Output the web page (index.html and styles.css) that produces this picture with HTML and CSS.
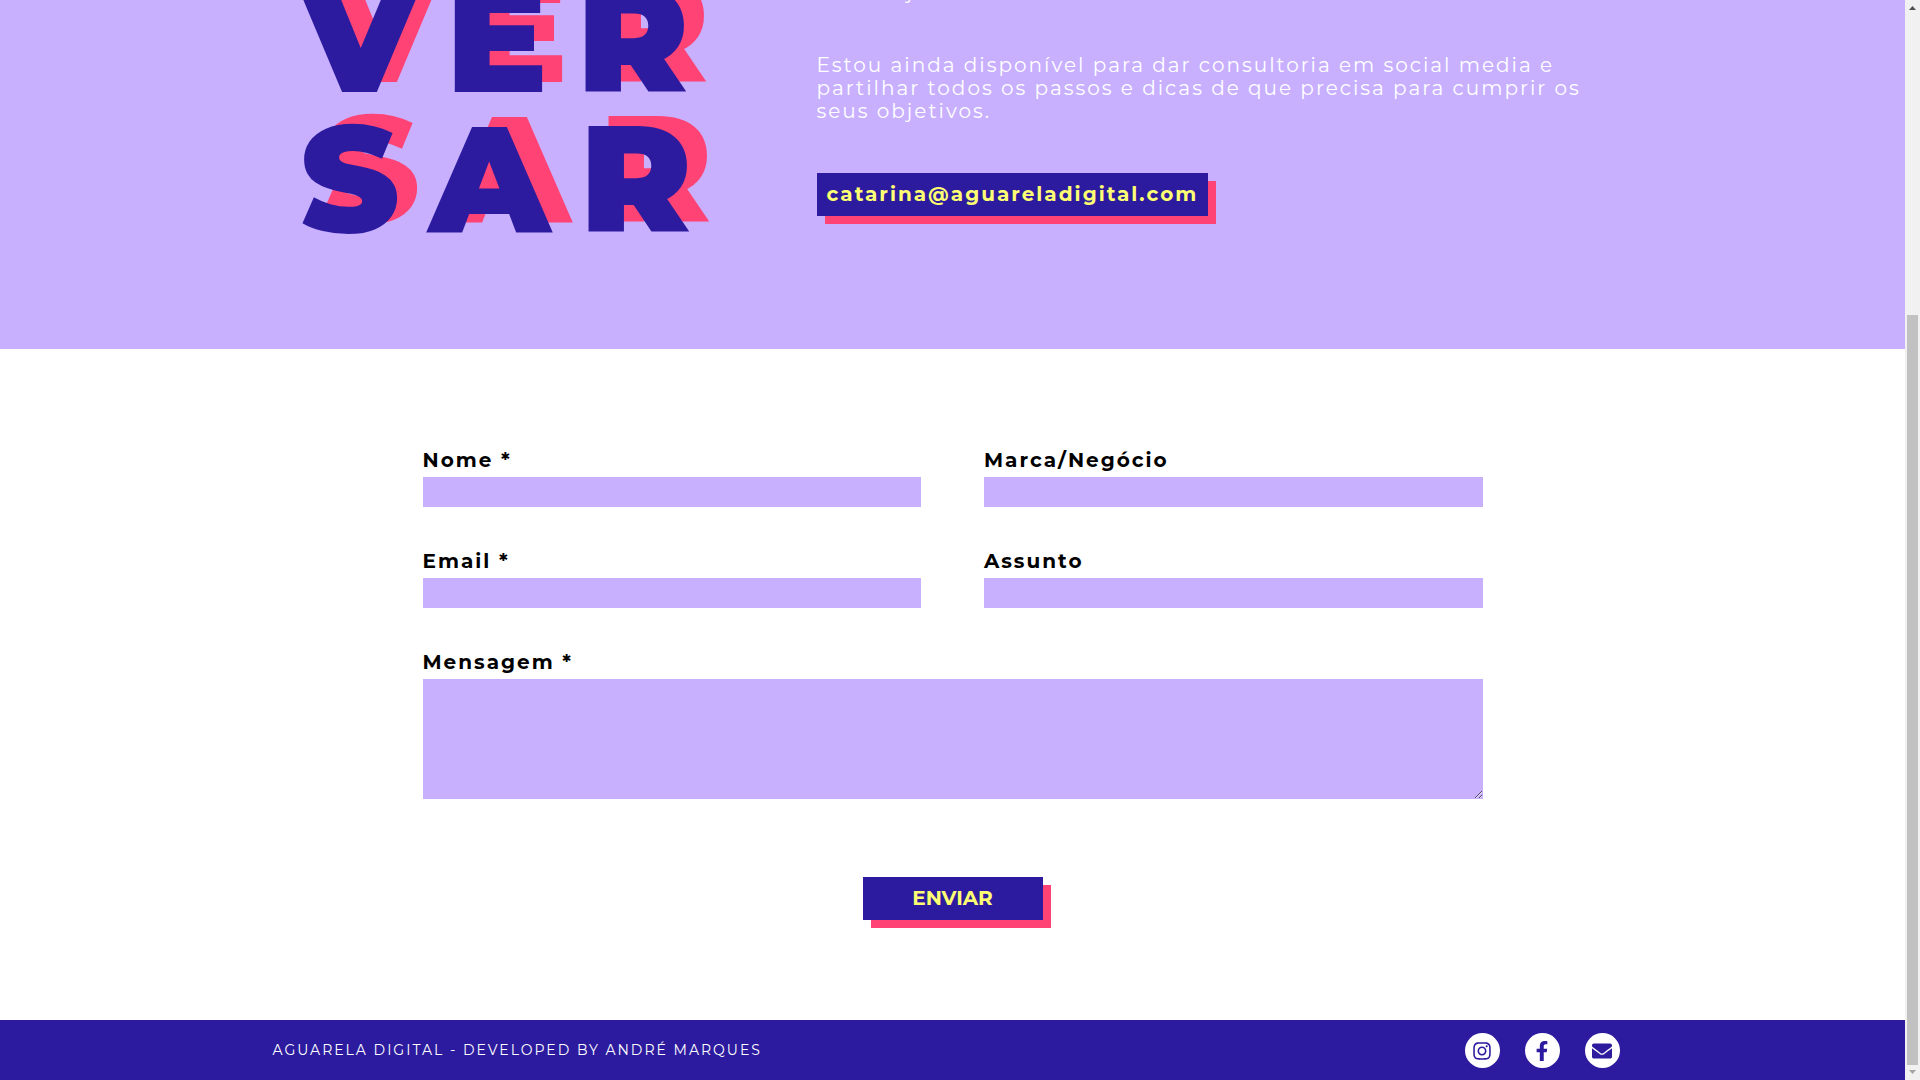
FILE: index.html
```html
<!DOCTYPE html>
<html lang="pt">
<head>
<meta charset="utf-8">
<title>Aguarela Digital</title>
<link rel="stylesheet" href="styles.css">
</head>
<body>
<div class="page">
  <section class="hero">
    <div class="hero-inner">
      <h1 class="hero-title">VER<br>SAR</h1>
      <div class="hero-info">
        <p>seus objetivos.</p>
        <p>Estou ainda disponível para dar consultoria em social media e<br>partilhar todos os passos e dicas de que precisa para cumprir os<br>seus objetivos.</p>
        <a class="email" href="mailto:catarina@aguareladigital.com">catarina@aguareladigital.com</a>
      </div>
    </div>
  </section>
  <main class="contact">
    <form class="form">
      <div class="field"><label for="nome">Nome *</label><input id="nome" type="text"></div>
      <div class="field"><label for="marca">Marca/Negócio</label><input id="marca" type="text"></div>
      <div class="field"><label for="email">Email *</label><input id="email" type="email"></div>
      <div class="field"><label for="assunto">Assunto</label><input id="assunto" type="text"></div>
      <div class="field wide"><label for="mensagem">Mensagem *</label><textarea id="mensagem"></textarea></div>
      <button class="send" type="submit">ENVIAR</button>
    </form>
  </main>
  <footer class="footer">
    <div class="footer-inner">
      <span class="credit">AGUARELA DIGITAL - DEVELOPED BY ANDRÉ MARQUES</span>
      <nav class="social">
        <a href="#instagram" aria-label="Instagram"><svg width="20" height="20" viewBox="-32 0 512 512" fill="currentColor"><path d="M224.100 141c-63.600 0-114.900 51.300-114.900 114.900s51.300 114.900 114.900 114.900S339 319.500 339 255.900 287.700 141 224.100 141zm0 189.600c-41.100 0-74.700-33.500-74.700-74.700s33.500-74.700 74.700-74.700 74.700 33.500 74.700 74.700-33.600 74.700-74.700 74.700zm146.400-194.300c0 14.900-12 26.800-26.800 26.800-14.900 0-26.800-12-26.800-26.800s12-26.800 26.800-26.800 26.800 12 26.800 26.800zm76.100 27.200c-1.700-35.900-9.900-67.700-36.200-93.900-26.200-26.200-58-34.400-93.900-36.200-37-2.100-147.900-2.100-184.900 0-35.800 1.700-67.600 9.900-93.900 36.100s-34.400 58-36.200 93.900c-2.100 37-2.100 147.900 0 184.900 1.700 35.900 9.900 67.700 36.200 93.900s58 34.400 93.900 36.200c37 2.100 147.900 2.100 184.900 0 35.900-1.700 67.700-9.900 93.900-36.200 26.200-26.200 34.400-58 36.200-93.900 2.100-37 2.100-147.800 0-184.800zM398.800 388c-7.800 19.600-22.900 34.700-42.600 42.600-29.500 11.700-99.500 9-132.100 9s-102.700 2.600-132.100-9c-19.600-7.800-34.700-22.900-42.600-42.600-11.700-29.500-9-99.500-9-132.100s-2.600-102.700 9-132.100c7.800-19.600 22.900-34.700 42.600-42.600 29.500-11.700 99.500-9 132.100-9s102.700-2.600 132.100 9c19.600 7.800 34.700 22.900 42.600 42.600 11.700 29.500 9 99.500 9 132.100s2.700 102.700-9 132.100z"/></svg></a>
        <a href="#facebook" aria-label="Facebook"><svg width="20" height="20" viewBox="-96 0 512 512" fill="currentColor"><path d="M279.140 288l14.220-92.660h-88.910v-60.130c0-25.350 12.420-50.060 52.240-50.060h40.420V6.260S260.430 0 225.360 0c-73.220 0-121.080 44.380-121.080 124.720v70.620H22.890V288h81.390v224h100.170V288z"/></svg></a>
        <a href="mailto:catarina@aguareladigital.com" aria-label="Email"><svg width="20" height="20" viewBox="0 0 512 512" fill="currentColor"><path d="M502.300 190.800c3.900-3.100 9.700-.2 9.700 4.700V400c0 26.500-21.500 48-48 48H48c-26.500 0-48-21.500-48-48V195.600c0-5 5.700-7.800 9.700-4.700 22.400 17.400 52.100 39.500 154.100 113.600 21.100 15.400 56.700 47.800 92.200 47.600 35.700.3 72-32.800 92.300-47.600 102-74.100 131.600-96.300 154-113.700zM256 320c23.200.4 56.600-29.200 73.400-41.400 132.700-96.300 142.800-104.700 173.400-128.700 5.800-4.500 9.200-11.500 9.200-18.900v-19c0-26.500-21.500-48-48-48H48c-26.500 0-48 21.500-48 48v19c0 7.400 3.400 14.300 9.200 18.900 30.600 23.900 40.700 32.400 173.400 128.700 16.800 12.200 50.200 41.800 73.400 41.400z"/></svg></a>
      </nav>
    </div>
  </footer>
</div>
<div class="scrollbar" aria-hidden="true">
  <svg width="15" height="15" viewBox="0 0 15 15"><path d="M4 10h7L7.500 6z" fill="#505050"/></svg>
  <div class="thumb"></div>
  <svg width="15" height="15" viewBox="0 0 15 15"><path d="M4 5h7L7.500 9z" fill="#a3a3a3"/></svg>
</div>
</body>
</html>
```
FILE: styles.css
```css
:root {
  --lilac: #c8b0ff;
  --navy: #2c1b9e;
  --pink: #ff4374;
  --yellow: #ffff73;
}
* { box-sizing: border-box; }
body {
  margin: 0;
  display: flex;
  height: 100vh;
  overflow: hidden;
  background: #fff;
  font-family: Montserrat, Inter, "Liberation Sans", sans-serif;
  font-size: 20px;
  line-height: 23px;
}
.page { flex: 1; display: flex; flex-direction: column; }
.hero {
  display: flex;
  justify-content: center;
  align-items: flex-end;
  height: 349px;
  padding-bottom: 100px;
  overflow: hidden;
  background: var(--lilac);
}
.hero-inner {
  width: 100%;
  max-width: 1360px;
  display: grid;
  grid-template-columns: 2fr 3fr;
  align-items: end;
}
.hero-title {
  margin: 0;
  padding-left: 28px;
  color: var(--navy);
  font-size: 150px;
  line-height: 140px;
  font-weight: 900;
  letter-spacing: 30px;
  text-shadow: 20px -10px 0 var(--pink);
}
.hero-info {
  display: flex;
  flex-direction: column;
  align-items: flex-start;
  gap: 50px;
  padding-bottom: 33px;
  color: #fff;
  letter-spacing: 2px;
  white-space: nowrap;
}
.hero-info p { margin: 0; }
.email {
  padding: 10px;
  background: var(--navy);
  box-shadow: 8px 8px 0 var(--pink);
  color: var(--yellow);
  font-weight: 700;
  text-decoration: none;
}
.contact { flex: 1; padding: 100px 20px 0; }
.form {
  max-width: 1060px;
  margin: 0 auto;
  display: grid;
  grid-template-columns: 1fr 1fr;
  column-gap: 63px;
  row-gap: 43px;
}
.field { display: flex; flex-direction: column; gap: 5px; }
.field label { font-weight: 700; letter-spacing: 2px; }
.field input, .field textarea {
  width: 100%;
  height: 30px;
  margin: 0;
  border: 0;
  border-radius: 0;
  background: var(--lilac);
  font: inherit;
}
.field textarea { height: 120px; resize: vertical; }
.wide { grid-column: 1 / -1; }
.send {
  grid-column: 1 / -1;
  justify-self: center;
  width: 180px;
  margin-top: 35px;
  padding: 10px;
  border: 0;
  background: var(--navy);
  box-shadow: 8px 8px 0 var(--pink);
  color: var(--yellow);
  font: inherit;
  font-weight: 700;
}
.footer {
  display: flex;
  justify-content: center;
  padding: 13px 0 12px;
  background: var(--navy);
  color: #fff;
}
.footer-inner {
  width: 100%;
  max-width: 1360px;
  display: flex;
  align-items: center;
  justify-content: space-between;
  padding-right: 13px;
}
.credit { font-size: 14px; letter-spacing: 2px; }
.social { display: flex; gap: 25px; }
.social a {
  display: grid;
  place-items: center;
  width: 35px;
  height: 35px;
  border-radius: 50%;
  background: #fff;
  color: var(--navy);
}
.scrollbar {
  width: 15px;
  display: flex;
  flex-direction: column;
  background: #f1f1f1;
}
.thumb { flex: 1; margin: 300px 2px 0; background: #c1c1c1; }
```
